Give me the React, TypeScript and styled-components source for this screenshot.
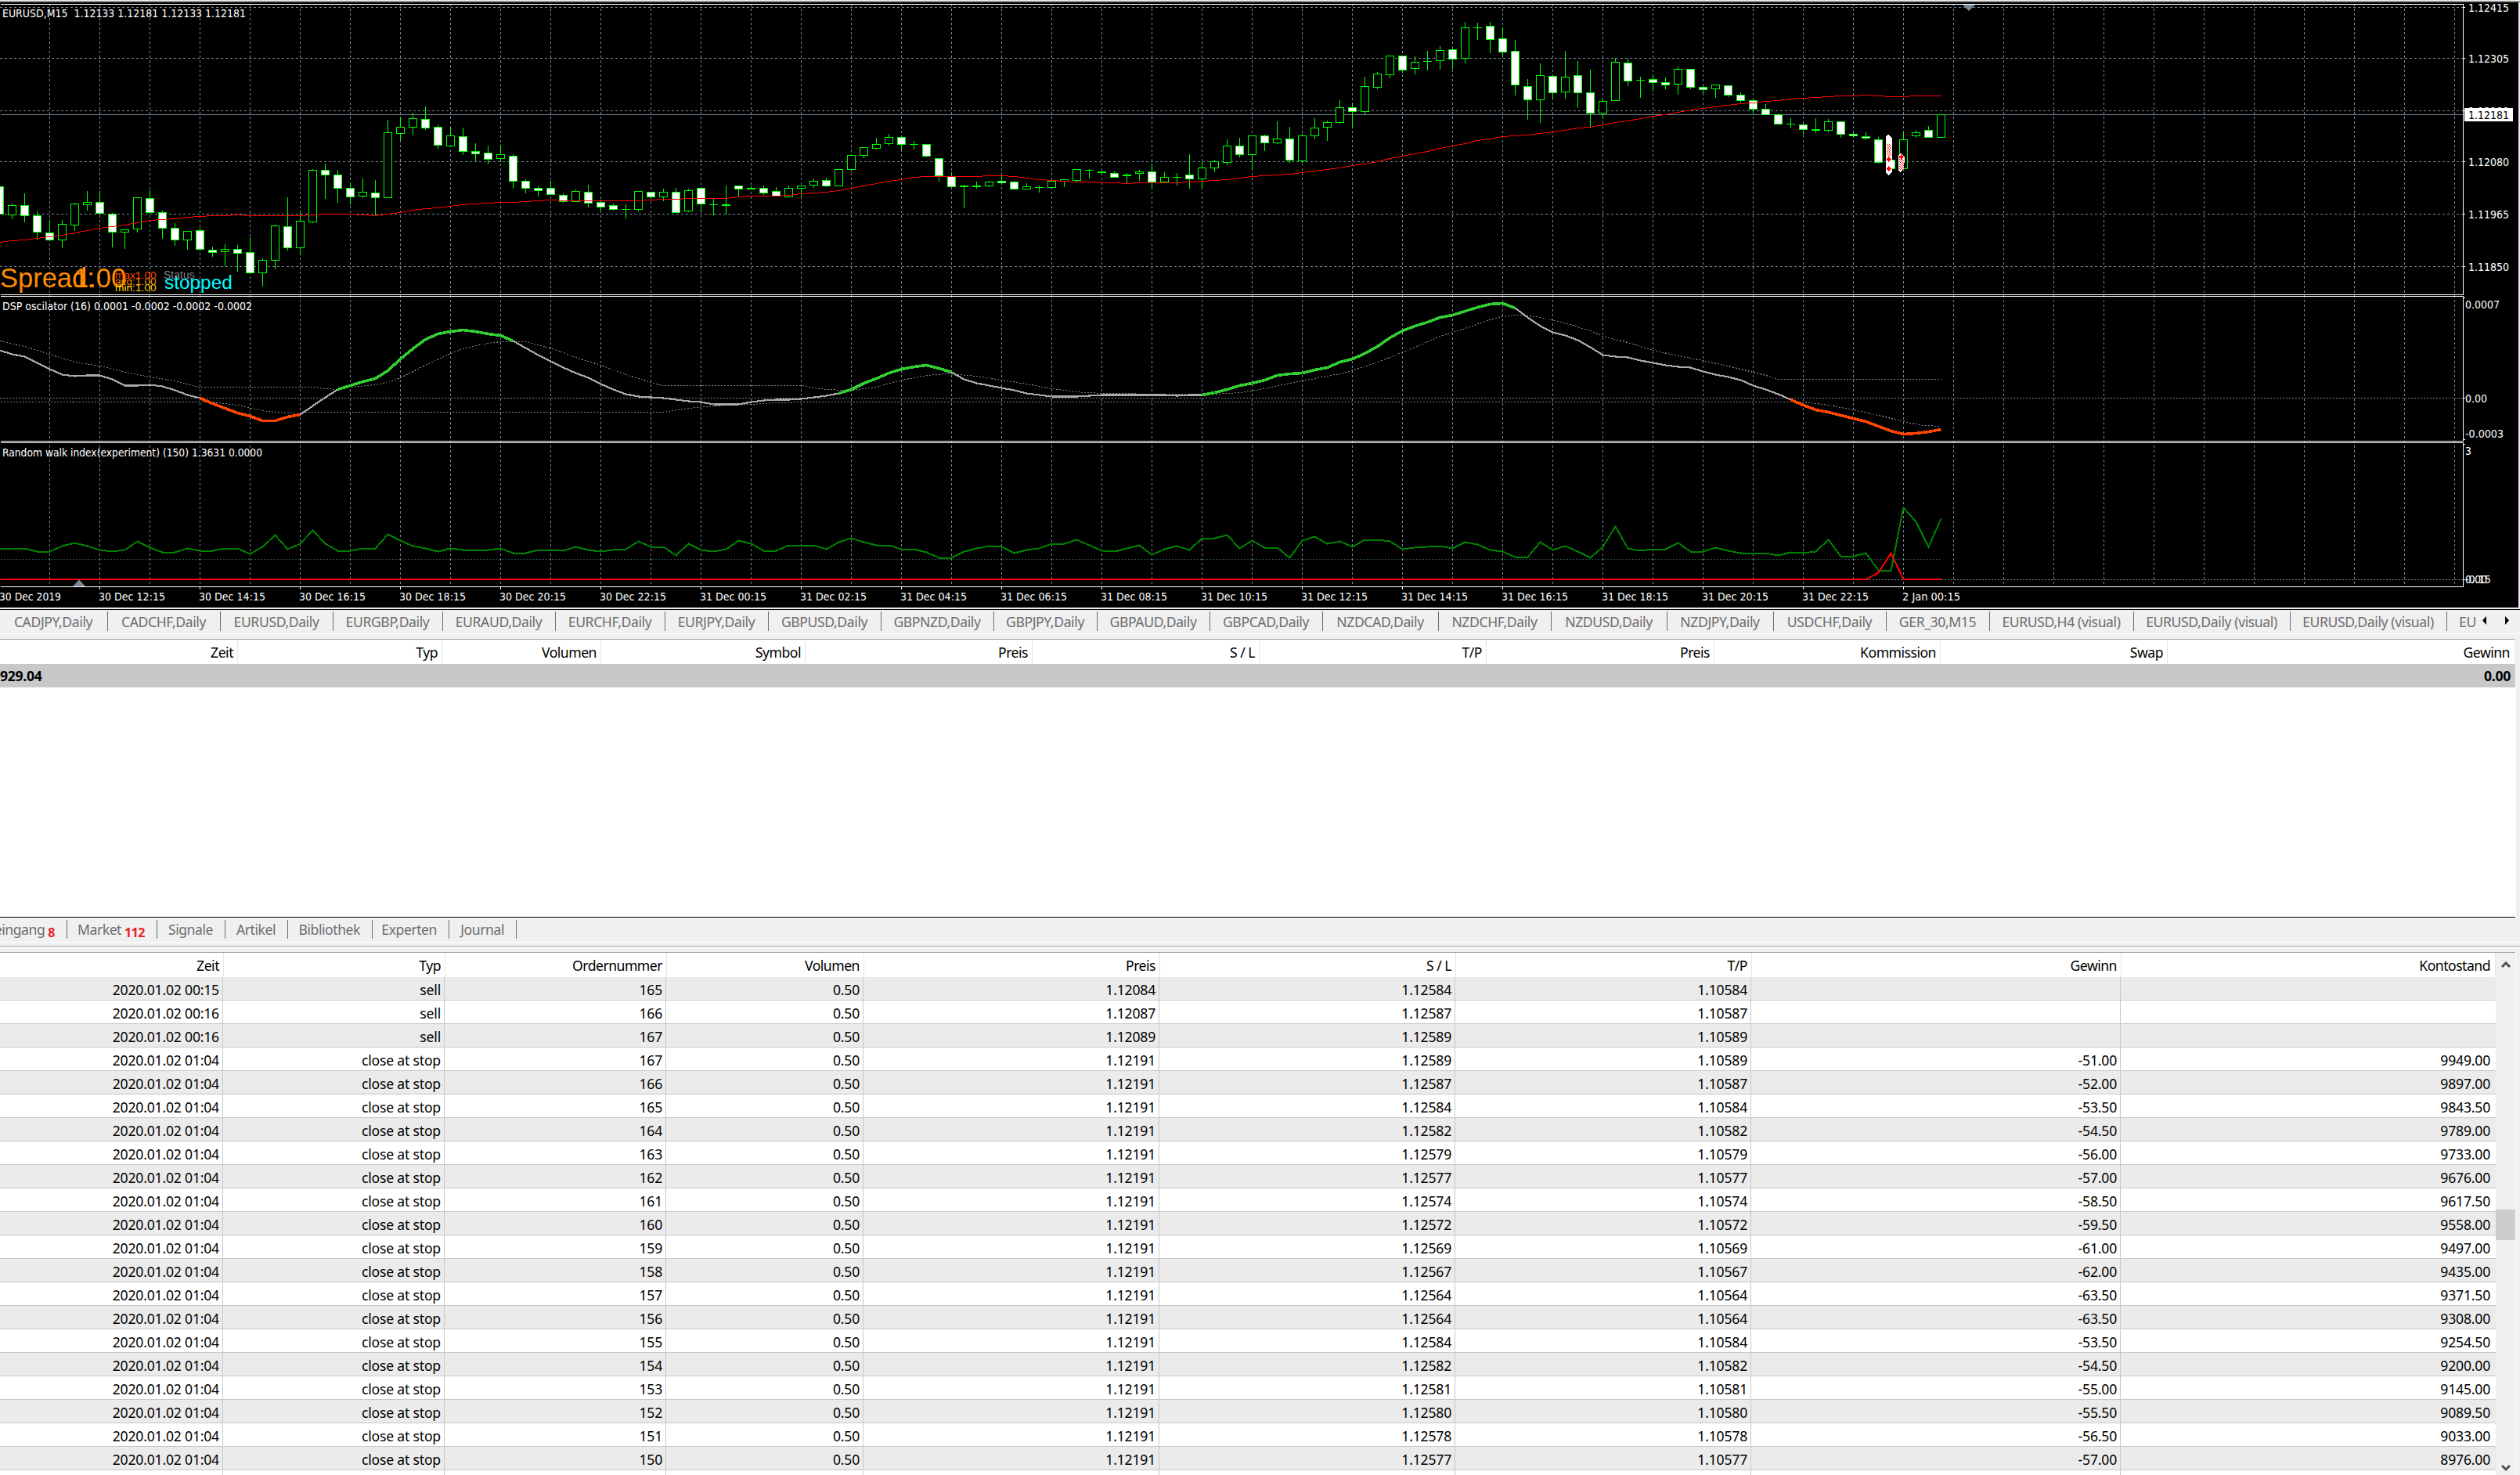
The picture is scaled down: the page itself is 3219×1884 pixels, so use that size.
import { Fragment } from 'react';
import styled, { createGlobalStyle } from 'styled-components';

const GlobalStyle = createGlobalStyle`
  html,
  body {
    margin: 0;
    padding: 0;
    background: #f0f0f0;
  }
`;

const uiFont = `'Noto Sans', 'Open Sans', sans-serif`;
const chartFont = `'DejaVu Sans Condensed', 'DejaVu Sans', sans-serif`;

const grid = '#778899';
const lime = '#00ff00';

const Terminal = styled.div`
  display: flex;
  flex-direction: column;
  width: 3219px;
  height: 1884px;
  overflow: hidden;
  background: #f0f0f0;
  font-family: ${uiFont};
  font-size: 17.6px;
  color: #000;
`;

const ChartWindow = styled.div`
  box-sizing: border-box;
  height: 779px;
  flex: none;
  border-top: 1px solid #f0f0f0;
  border-bottom: 1px solid #000;
  background: #f4eef4;

  .bevel {
    height: 2px;
    box-sizing: border-box;
    background: #696969;
    border-top: 1px solid #a8a8a8;
  }

  svg {
    display: block;
    background: #000;
    font-family: ${chartFont};
    font-size: 14.2px;
  }

  .object {
    font-family: 'Liberation Sans', Arial, sans-serif;
  }
`;

const ChartTabs = styled.div`
  display: flex;
  flex: none;
  box-sizing: border-box;
  height: 31px;
  padding: 2px 0 4px;
  border-bottom: 1px solid #fff;
  overflow: hidden;
  color: #6d6d6d;
`;

const ChartTab = styled.div<{ $width: number }>`
  display: flex;
  align-items: center;
  justify-content: center;
  flex: none;
  box-sizing: border-box;
  width: ${({ $width }) => $width}px;
  height: 25px;
  padding-right: 1px;
  border-right: 1px solid #6d6d6d;
  letter-spacing: -0.4px;
  white-space: pre;

  &:last-of-type {
    justify-content: flex-start;
    padding-left: 15px;
    border-right: 0;
  }
`;

const TabArrows = styled.svg`
  flex: none;
  margin-top: 1px;
`;

const Panel = styled.div<{ $height: number }>`
  display: flex;
  flex-direction: column;
  flex: none;
  box-sizing: border-box;
  width: 3213px;
  height: ${({ $height }) => $height}px;
  background: #fff;
  border-top: 1px solid #a0a0a0;
  overflow: hidden;
  box-shadow: 1px 0 0 #fafafa;
`;

const TradePanel = styled(Panel)`
  margin-top: 6px;
  border-bottom: 1px solid #000;
`;

const HeaderRow = styled.div<{ $columns: string; $height: number }>`
  display: grid;
  flex: none;
  grid-template-columns: ${({ $columns }) => $columns};
  height: ${({ $height }) => $height}px;
`;

const HeaderCell = styled.div`
  display: flex;
  align-items: center;
  justify-content: flex-end;
  padding: 1px 5px 0 0;
  border-right: 1px solid #e5e5e5;
  letter-spacing: -0.5px;

  &:last-child {
    padding-right: 6px;
  }
`;

const SummaryRow = styled.div`
  display: flex;
  align-items: center;
  justify-content: space-between;
  flex: none;
  height: 30px;
  padding-right: 6px;
  background: #c8c8c8;
  font-weight: bold;
  letter-spacing: -0.3px;
`;

const ToolTabs = styled.div`
  display: flex;
  flex: none;
  box-sizing: border-box;
  height: 32px;
  padding: 3px 0 4px;
  border-bottom: 1px solid #fff;
  color: #6d6d6d;
  overflow: hidden;
`;

const ToolTab = styled.div<{ $width: number }>`
  display: flex;
  align-items: center;
  justify-content: flex-end;
  flex: none;
  box-sizing: border-box;
  width: ${({ $width }) => $width}px;
  height: 24px;
  padding-right: 15px;
  border-right: 1px solid #6d6d6d;
  letter-spacing: -0.45px;

  .count {
    margin: 8px 0 0 4px;
    font-size: 16px;
    font-weight: bold;
    color: #ed1c24;
    letter-spacing: -0.5px;
  }
`;

const Splitter = styled.div`
  flex: none;
  height: 2px;
  box-sizing: border-box;
  margin: 4px 0 6px;
  background: #fff;
  border-top: 1px solid #a0a0a0;
`;

const ResultsPanel = styled(Panel)`
  flex-direction: row;
`;

const Results = styled.div`
  width: 3188px;
  flex: none;
  overflow: hidden;
`;

const ResultRow = styled.div<{ $even: boolean }>`
  display: grid;
  grid-template-columns: 285px 283px 283px 252px 378px 378px 378px 472px 479px;
  box-sizing: border-box;
  height: 30px;
  border-bottom: 1px solid #c8c8c8;
  background: ${({ $even }) => ($even ? '#ebebeb' : '#fff')};
`;

const Cell = styled.div`
  display: flex;
  align-items: center;
  justify-content: flex-end;
  padding: 2px 4px 0 0;
  border-right: 1px solid #c8c8c8;
  letter-spacing: -0.2px;

  &:last-child {
    padding-right: 6px;
    border-right-color: transparent;
  }
`;

const ScrollBar = styled.div`
  display: flex;
  flex-direction: column;
  align-items: center;
  width: 25px;
  height: 668px;
  background: #f0f0f0;

  .thumb {
    width: 25px;
    height: 39px;
    margin: 308px 0 auto;
    background: #cdcdcd;
  }

  svg {
    margin: 10px 0 0;
  }

  .down {
    margin: 0 0 5px;
  }
`;

const BAR = 16;
const barX = (i: number) => i * BAR - 1;

// high, body top, body bottom, low, 1 = falling bar
const candles: number[][] = [
  [238, 238, 273, 273, 1], [260, 262, 274, 279, 0], [247, 262, 275, 283, 1], [270, 275, 296, 306, 1],
  [281, 297, 306, 307, 1], [281, 286, 306, 316, 0], [259, 260, 287, 294, 0], [244, 258, 261, 268, 0],
  [244, 258, 272, 273, 1], [272, 273, 296, 315, 1], [293, 293, 296, 317, 0], [252, 252, 292, 296, 0],
  [243, 253, 271, 272, 1], [269, 271, 291, 304, 1], [285, 291, 306, 313, 1], [295, 295, 306, 318, 0],
  [291, 294, 318, 319, 1], [315, 319, 322, 327, 1], [312, 318, 321, 339, 0], [313, 318, 323, 346, 1],
  [303, 322, 348, 349, 1], [330, 332, 348, 365, 0], [287, 288, 332, 343, 0], [252, 289, 316, 319, 1],
  [269, 282, 316, 325, 0], [216, 217, 283, 284, 0], [209, 217, 223, 253, 1], [217, 223, 240, 258, 1],
  [233, 240, 251, 260, 1], [228, 245, 250, 252, 0], [230, 246, 252, 274, 1], [153, 169, 252, 252, 0],
  [149, 162, 170, 178, 0], [144, 151, 162, 172, 0], [136, 152, 163, 165, 1], [159, 162, 185, 189, 1],
  [163, 173, 186, 187, 0], [163, 174, 193, 197, 1], [183, 193, 196, 205, 1], [186, 195, 203, 209, 1],
  [185, 197, 202, 206, 0], [197, 199, 231, 240, 1], [229, 231, 240, 246, 1], [237, 240, 243, 250, 1],
  [231, 240, 248, 248, 1], [247, 249, 257, 258, 1], [242, 244, 257, 257, 0], [236, 245, 259, 264, 1],
  [255, 258, 264, 270, 1], [260, 262, 267, 268, 1], [261, 267, 267, 278, 0], [244, 244, 267, 269, 0],
  [245, 245, 251, 253, 1], [241, 245, 251, 256, 0], [240, 245, 271, 271, 1], [241, 243, 269, 270, 0],
  [239, 240, 260, 270, 1], [254, 261, 261, 274, 0], [237, 261, 262, 273, 0], [237, 237, 241, 250, 1],
  [237, 240, 241, 241, 0], [237, 240, 246, 248, 1], [239, 244, 250, 250, 1], [237, 240, 251, 251, 0],
  [237, 237, 240, 250, 0], [228, 231, 236, 239, 0], [227, 230, 237, 238, 1], [216, 216, 237, 237, 0],
  [197, 198, 216, 218, 0], [188, 188, 198, 201, 0], [176, 184, 189, 190, 0], [171, 175, 183, 185, 0],
  [174, 175, 184, 191, 1], [180, 184, 184, 190, 0], [184, 184, 199, 200, 1], [202, 202, 224, 231, 1],
  [220, 225, 238, 238, 1], [236, 237, 238, 265, 0], [232, 237, 238, 240, 0], [231, 232, 237, 238, 0],
  [225, 231, 233, 235, 1], [231, 232, 241, 241, 1], [234, 238, 241, 241, 0], [237, 239, 239, 245, 0],
  [231, 231, 239, 239, 0], [229, 229, 231, 238, 0], [216, 216, 230, 231, 0], [216, 217, 217, 227, 0],
  [219, 219, 220, 223, 0], [219, 221, 226, 226, 1], [221, 223, 224, 234, 0], [217, 219, 221, 230, 0],
  [209, 219, 232, 240, 1], [220, 226, 232, 232, 0], [221, 226, 226, 236, 0], [197, 223, 228, 240, 1],
  [207, 214, 228, 240, 0], [204, 206, 214, 219, 0], [178, 186, 207, 210, 0], [176, 186, 197, 200, 1],
  [173, 173, 197, 216, 0], [172, 173, 182, 192, 1], [155, 177, 182, 183, 0], [162, 177, 204, 207, 1],
  [171, 173, 205, 207, 0], [151, 163, 173, 177, 0], [154, 156, 162, 179, 0], [128, 137, 156, 157, 0],
  [131, 137, 142, 163, 1], [98, 110, 142, 146, 0], [92, 94, 111, 113, 0], [71, 71, 95, 99, 0],
  [71, 71, 89, 92, 1], [72, 79, 87, 94, 0], [65, 78, 78, 89, 0], [59, 64, 77, 88, 0],
  [62, 63, 75, 87, 1], [28, 35, 74, 80, 0], [29, 35, 35, 50, 0], [28, 33, 50, 67, 1],
  [35, 49, 66, 72, 1], [51, 65, 108, 121, 1], [101, 110, 127, 152, 1], [81, 96, 127, 156, 0],
  [95, 97, 118, 125, 1], [65, 98, 117, 125, 0], [78, 96, 118, 137, 1], [89, 118, 144, 162, 1],
  [125, 129, 144, 151, 0], [74, 79, 128, 128, 0], [75, 80, 103, 109, 1], [98, 102, 102, 124, 0],
  [97, 101, 105, 116, 1], [99, 105, 108, 113, 1], [85, 88, 107, 120, 0], [88, 88, 111, 113, 1],
  [110, 111, 114, 119, 1], [108, 108, 113, 124, 0], [109, 109, 121, 123, 1], [118, 121, 128, 130, 1],
  [126, 128, 139, 145, 1], [133, 139, 146, 146, 1], [145, 146, 158, 158, 1], [151, 158, 158, 163, 0],
  [158, 159, 165, 171, 1], [151, 165, 166, 169, 0], [152, 155, 166, 168, 0], [155, 155, 171, 175, 1],
  [169, 171, 173, 175, 1], [169, 174, 176, 178, 1], [175, 178, 207, 208, 1], [204, 204, 215, 215, 1],
  [169, 178, 215, 215, 0], [166, 169, 173, 175, 0], [161, 166, 175, 175, 1], [146, 146, 175, 175, 0],
];

const movingAverage = [
  309, 307, 306, 304, 302, 300, 297, 294, 291, 289, 287, 284, 281, 280, 279, 277, 276, 275, 275, 274,
  275, 275, 275, 275, 275, 274, 273, 273, 273, 274, 275, 273, 271, 268, 266, 265, 263, 261, 260, 259,
  258, 258, 257, 256, 255, 256, 256, 256, 256, 256, 256, 256, 255, 254, 254, 253, 253, 253, 253, 251,
  250, 250, 250, 249, 247, 246, 245, 243, 240, 237, 234, 231, 229, 226, 225, 225, 225, 225, 225, 224,
  224, 225, 227, 229, 230, 231, 232, 232, 233, 233, 234, 233, 233, 233, 233, 232, 231, 230, 229, 227,
  225, 224, 223, 222, 220, 218, 216, 214, 211, 209, 206, 202, 199, 196, 193, 189, 186, 183, 179, 177,
  174, 173, 172, 170, 168, 166, 163, 162, 159, 156, 154, 151, 148, 146, 143, 140, 138, 136, 134, 132,
  131, 129, 128, 126, 125, 124, 123, 122, 122, 121, 122, 123, 123, 122, 122, 122,
];

const dsp = [
  447, 452, 455, 463, 471, 478, 480, 479, 479, 484, 492, 492, 491, 493, 498, 504, 508, 515, 521, 527,
  531, 537, 537, 532, 529, 518, 507, 497, 492, 487, 483, 473, 458, 445, 433, 426, 423, 421, 423, 426,
  428, 435, 444, 453, 461, 469, 476, 482, 490, 497, 503, 506, 507, 508, 510, 512, 513, 516, 516, 516,
  513, 511, 510, 510, 509, 507, 505, 502, 497, 489, 483, 476, 471, 468, 466, 470, 475, 484, 489, 492,
  495, 498, 502, 504, 506, 506, 506, 505, 504, 504, 504, 504, 504, 504, 505, 504, 504, 501, 497, 492,
  489, 485, 479, 477, 476, 472, 469, 462, 458, 451, 442, 431, 422, 416, 411, 405, 402, 397, 392, 388,
  387, 393, 405, 416, 424, 428, 434, 443, 453, 455, 456, 460, 463, 466, 468, 469, 474, 478, 481, 485,
  492, 497, 503, 510, 517, 523, 526, 530, 534, 538, 544, 550, 554, 553, 551, 548,
];

const dspSegments: [number, number, string][] = [
  [0, 16, '#a9a9a9'],
  [16, 24, '#ff4500'],
  [24, 27, '#a9a9a9'],
  [27, 41, '#32cd32'],
  [41, 67, '#a9a9a9'],
  [67, 76, '#32cd32'],
  [76, 96, '#a9a9a9'],
  [96, 121, '#32cd32'],
  [121, 143, '#a9a9a9'],
  [143, 155, '#ff4500'],
];

const upperBand =
  '0,435 31,442 63,452 95,462 127,467 160,475 191,481 223,486 255,494 402,494 415,496 431,497 447,494 479,491 495,488 511,482 543,466 575,451 591,445 607,441 623,438 639,436 671,436 703,444 735,456 767,466 799,478 831,488 847,492 1024,492 1045,496 1073,498 1087,498 1119,494 1151,485 1183,479 1209,477 1247,480 1279,485 1311,490 1343,496 1382,501 1417,502 1487,503 1551,503 1583,501 1615,496 1647,489 1679,483 1711,477 1743,468 1759,462 1775,456 1807,443 1839,429 1871,419 1903,408 1919,404 1935,402 1951,403 1967,405 1999,412 2031,422 2047,429 2079,437 2111,447 2143,454 2175,460 2207,467 2239,475 2259,480 2271,484 2479,484';

const lowerBand =
  '0,513 271,513 303,517 335,524 351,526 383,528 385,526 847,526 879,521 911,518 959,516 991,514 1031,513 2279,513 2303,513 2335,517 2367,523 2399,530 2431,538 2457,543 2479,544';

const walkIndex = [
  701, 700, 700, 704, 704, 697, 693, 697, 702, 704, 702, 691, 699, 705, 705, 700, 703, 703, 700, 700,
  707, 698, 683, 701, 694, 677, 694, 703, 703, 700, 700, 682, 690, 697, 700, 704, 700, 702, 702, 702,
  700, 706, 706, 702, 702, 703, 698, 702, 704, 702, 701, 691, 698, 698, 709, 694, 702, 704, 701, 690,
  694, 703, 703, 696, 696, 696, 701, 692, 687, 692, 696, 696, 701, 701, 705, 712, 712, 704, 700, 697,
  698, 706, 702, 700, 694, 694, 689, 696, 703, 704, 700, 696, 708, 701, 697, 702, 687, 687, 683, 700,
  690, 699, 699, 712, 690, 685, 694, 691, 698, 689, 689, 691, 701, 699, 698, 697, 700, 692, 695, 702,
  704, 711, 711, 692, 702, 697, 704, 712, 698, 672, 700, 703, 701, 701, 693, 704, 704, 699, 703, 706,
  706, 706, 709, 705, 706, 704, 689, 710, 710, 706, 728, 728, 648, 666, 698, 662,
];

const toPoints = (values: number[], from = 0) =>
  values.map((y, i) => `${barX(from + i)},${y}`).join(' ');

const timeLabels = [
  '30 Dec 12:15', '30 Dec 14:15', '30 Dec 16:15', '30 Dec 18:15', '30 Dec 20:15',
  '30 Dec 22:15', '31 Dec 00:15', '31 Dec 02:15', '31 Dec 04:15', '31 Dec 06:15',
  '31 Dec 08:15', '31 Dec 10:15', '31 Dec 12:15', '31 Dec 14:15', '31 Dec 16:15',
  '31 Dec 18:15', '31 Dec 20:15', '31 Dec 22:15', '2 Jan 00:15',
];

const priceLevels: [number, string][] = [
  [9, '1.12415'],
  [74, '1.12305'],
  [141, '1.12190'],
  [206, '1.12080'],
  [273, '1.11965'],
  [340, '1.11850'],
];

const Label = ({ x, y, width, children }: { x: number; y: number; width: number; children: string }) => (
  <text x={x} y={y} textLength={width} lengthAdjust="spacingAndGlyphs" style={{ whiteSpace: 'pre' }}>
    {children}
  </text>
);

const TradeMarks = () => (
  <g shapeRendering="crispEdges">
    <polygon fill="#fff" points="2411,172 2413,172 2417,177 2417,219 2412,224 2409,221 2409,174" />
    <rect x="2410" y="184" width="6" height="16" fill="url(#hatch)" />
    <polygon fill="#fff" points="2427,196 2430,197 2433,201 2432,216 2427,220 2425,218 2425,198" />
    <rect x="2426" y="203" width="6" height="14" fill="url(#hatch)" />
    {[[2410, 203], [2410, 215], [2426, 200]].map(([x, y]) => (
      <polygon
        key={`${x}-${y}`}
        fill="#ff0000"
        points={`${x},${y - 1} ${x + 2},${y - 1} ${x + 2},${y - 3} ${x + 6},${y + 0.5} ${x + 2},${y + 4} ${x + 2},${y + 2} ${x},${y + 2}`}
      />
    ))}
  </g>
);

const Chart = () => (
  <svg width="3217" height="773" viewBox="0 3 3217 773">
    <defs>
      <pattern id="hatch" width="3" height="3" patternUnits="userSpaceOnUse">
        <path d="M0 0h1v1H0zM1 1h1v1H1zM2 2h1v1H2z" fill="#ff0000" />
      </pattern>
    </defs>

    <g transform="translate(.5 .5)" shapeRendering="crispEdges" fill="none">
      <g stroke={grid} strokeDasharray="3 3">
        {Array.from({ length: 49 }, (_, i) => (
          <path key={i} d={`M${63 + i * 64} 4.5V749`} />
        ))}
        {priceLevels.map(([y]) => (
          <path key={y} d={`M-.5 ${y}H3146`} />
        ))}
      </g>
      <path d="M0 146H3146" stroke={grid} />
      <path d="M-.5 508H3146M-.5 740H3146" stroke={grid} strokeDasharray="2 2" />

      <g stroke={lime}>
        {candles.map(([high, top, bottom, low, falling], i) => (
          <Fragment key={i}>
            <path d={`M${barX(i)} ${high - 0.5}V${low + 0.5}`} />
            {bottom > top ? (
              <rect
                x={barX(i) - 5}
                y={top}
                width="10"
                height={bottom - top}
                fill={falling ? '#fff' : '#000'}
              />
            ) : (
              <path d={`M${barX(i) - 5.5} ${top}h11`} />
            )}
          </Fragment>
        ))}
      </g>
      <polyline points={toPoints(movingAverage)} stroke="#ff0000" />

      <g stroke="#808080" strokeDasharray="2 2">
        <polyline points={upperBand} />
        <polyline points={lowerBand} />
      </g>
      {dspSegments.map(([from, to, color]) => (
        <polyline
          key={from}
          points={toPoints(dsp.slice(from, to + 1), from)}
          stroke={color}
          strokeWidth={color === '#a9a9a9' ? 2.2 : 3.6}
        />
      ))}

      <path d="M0 714H2479" stroke="#2f4f4f" strokeDasharray="2 2" />
      <polyline points={toPoints(walkIndex)} stroke="#008000" strokeWidth="2" />
      <polyline
        points="0,739.5 2383,739.5 2399,731 2415,706 2431,739.5 2479,739.5"
        stroke="#ff0000"
        strokeWidth="2"
      />

      <g stroke="#fff">
        <path d="M0 5H3146V376H0M0 378H3146V563H0M0 565H3146V749H0" />
        {priceLevels.map(([y]) => (
          <path key={y} d={`M3146 ${y}h2.5`} />
        ))}
        <path d="M3146 380h2.5M3146 508h2.5M3146 561h2.5M3146 567h2.5M3146 740h2.5" />
        {timeLabels.map((_, i) => (
          <path key={i} d={`M${127 + i * 128} 749v3.5`} />
        ))}
      </g>
    </g>

    <TradeMarks />
    <path d="M2507 6h16l-8 8z" fill={grid} />
    <path d="M93 749h16l-8-9z" fill={grid} />

    <g fill="#fff">
      <Label x={3} y={22} width={311}>
        {'EURUSD,M15  1.12133 1.12181 1.12133 1.12181'}
      </Label>
      <Label x={3} y={396} width={319}>
        DSP oscilator (16) 0.0001 -0.0002 -0.0002 -0.0002
      </Label>
      <Label x={3} y={583} width={332}>
        Random walk index(experiment) (150) 1.3631 0.0000
      </Label>
      {priceLevels.map(([y, label]) => (
        <Label key={label} x={3153} y={y + 6} width={52}>
          {label}
        </Label>
      ))}
      <Label x={3149} y={394} width={44}>0.0007</Label>
      <Label x={3149} y={514} width={28}>0.00</Label>
      <Label x={3149} y={559} width={49}>-0.0003</Label>
      <Label x={3149} y={581} width={8}>3</Label>
      <Label x={3149} y={745} width={28}>0.00</Label>
      <Label x={3149} y={745} width={33}>-0.15</Label>
      <Label x={-1} y={767} width={79}>30 Dec 2019</Label>
      {timeLabels.map((label, i) => (
        <Label key={label} x={126 + i * 128} y={767} width={i === 18 ? 74 : 85}>
          {label}
        </Label>
      ))}
    </g>
    <rect x="3148" y="138" width="62" height="17" fill="#fff" />
    <Label x={3153} y={152} width={52}>1.12181</Label>

    <g className="object">
      <text x="0" y="367" fontSize="34.5" fill="#ff8c00">Spread:</text>
      <text x="94" y="367" fontSize="34.5" fill="#ff8c00">1.00</text>
      <g fontSize="13.7">
        <g fill="#ff4500">
          <text x="147" y="356">max:</text>
          <text x="173" y="356">1.00</text>
        </g>
        <g fill="#ff8c00">
          <text x="147" y="364">avg:</text>
          <text x="173" y="364">1.00</text>
        </g>
        <g fill="#ffd700">
          <text x="147" y="372">min:</text>
          <text x="173" y="372">1.00</text>
        </g>
        <text x="209" y="356" fontSize="14" fill="#808080">Status</text>
      </g>
      <text x="210" y="369" fontSize="24.4" fill="#00ffff">stopped</text>
    </g>
  </svg>
);

const chartTabs: [string, number][] = [
  ['CADJPY,Daily', 138],
  ['CADCHF,Daily', 144],
  ['EURUSD,Daily', 144],
  ['EURGBP,Daily', 140],
  ['EURAUD,Daily', 144],
  ['EURCHF,Daily', 140],
  ['EURJPY,Daily', 132],
  ['GBPUSD,Daily', 144],
  ['GBPNZD,Daily', 144],
  ['GBPJPY,Daily', 132],
  ['GBPAUD,Daily', 144],
  ['GBPCAD,Daily', 144],
  ['NZDCAD,Daily', 148],
  ['NZDCHF,Daily', 144],
  ['NZDUSD,Daily', 148],
  ['NZDJPY,Daily', 136],
  ['USDCHF,Daily', 144],
  ['GER_30,M15', 132],
  ['EURUSD,H4 (visual)', 184],
  ['EURUSD,Daily (visual)', 200],
  ['EURUSD,Daily (visual)', 200],
  ['EU', 44],
];

const tradeHeaders = [
  'Zeit', 'Typ', 'Volumen', 'Symbol', 'Preis', 'S / L', 'T/P', 'Preis', 'Kommission', 'Swap', 'Gewinn',
];

const toolTabs: { label: string; width: number; count?: number }[] = [
  { label: 'eingang', width: 86, count: 8 },
  { label: 'Market', width: 115, count: 112 },
  { label: 'Signale', width: 87 },
  { label: 'Artikel', width: 80 },
  { label: 'Bibliothek', width: 108 },
  { label: 'Experten', width: 98 },
  { label: 'Journal', width: 86 },
];

const resultHeaders = [
  'Zeit', 'Typ', 'Ordernummer', 'Volumen', 'Preis', 'S / L', 'T/P', 'Gewinn', 'Kontostand',
];

const closed = '2020.01.02 01:04';

const results: string[][] = [
  ['2020.01.02 00:15', 'sell', '165', '1.12084', '1.12584', '1.10584', '', ''],
  ['2020.01.02 00:16', 'sell', '166', '1.12087', '1.12587', '1.10587', '', ''],
  ['2020.01.02 00:16', 'sell', '167', '1.12089', '1.12589', '1.10589', '', ''],
  ...[
    ['167', '589', '-51.00', '9949.00'],
    ['166', '587', '-52.00', '9897.00'],
    ['165', '584', '-53.50', '9843.50'],
    ['164', '582', '-54.50', '9789.00'],
    ['163', '579', '-56.00', '9733.00'],
    ['162', '577', '-57.00', '9676.00'],
    ['161', '574', '-58.50', '9617.50'],
    ['160', '572', '-59.50', '9558.00'],
    ['159', '569', '-61.00', '9497.00'],
    ['158', '567', '-62.00', '9435.00'],
    ['157', '564', '-63.50', '9371.50'],
    ['156', '564', '-63.50', '9308.00'],
    ['155', '584', '-53.50', '9254.50'],
    ['154', '582', '-54.50', '9200.00'],
    ['153', '581', '-55.00', '9145.00'],
    ['152', '580', '-55.50', '9089.50'],
    ['151', '578', '-56.50', '9033.00'],
    ['150', '577', '-57.00', '8976.00'],
  ].map(([order, pips, profit, balance]) => [
    closed, 'close at stop', order, '1.12191', `1.12${pips}`, `1.10${pips}`, profit, balance,
  ]),
];

const App = () => {
  return (
    <Terminal>
      <GlobalStyle />
      <ChartWindow>
        <div className="bevel" />
        <Chart />
      </ChartWindow>
      <ChartTabs>
        {chartTabs.map(([label, width], i) => (
          <ChartTab key={i} $width={width}>
            {label}
          </ChartTab>
        ))}
        <TabArrows width="40" height="20" viewBox="0 0 40 20">
          <path d="M6 5v11L1 10.500zM30 5v11l5-5.500z" fill="#000" />
        </TabArrows>
      </ChartTabs>

      <TradePanel $height={356}>
        <HeaderRow
          $height={31}
          $columns="304px 261px 203px 261px 290px 290px 290px 291px 289px 290px 444px"
        >
          {tradeHeaders.map((header, i) => (
            <HeaderCell key={i}>{header}</HeaderCell>
          ))}
        </HeaderRow>
        <SummaryRow>
          <span>929.04</span>
          <span>0.00</span>
        </SummaryRow>
      </TradePanel>

      <ToolTabs>
        {toolTabs.map(({ label, width, count }) => (
          <ToolTab key={label} $width={width}>
            {label}
            {count && <span className="count">{count}</span>}
          </ToolTab>
        ))}
      </ToolTabs>
      <Splitter />

      <ResultsPanel $height={668}>
        <Results>
          <HeaderRow
            $height={31}
            $columns="286px 283px 283px 252px 378px 378px 378px 472px 478px"
          >
            {resultHeaders.map((header) => (
              <HeaderCell key={header}>{header}</HeaderCell>
            ))}
          </HeaderRow>
          {results.map(([time, type, order, price, sl, tp, profit, balance], i) => (
            <ResultRow key={i} $even={i % 2 === 0}>
              <Cell>{time}</Cell>
              <Cell>{type}</Cell>
              <Cell>{order}</Cell>
              <Cell>0.50</Cell>
              <Cell>{price}</Cell>
              <Cell>{sl}</Cell>
              <Cell>{tp}</Cell>
              <Cell>{profit}</Cell>
              <Cell>{balance}</Cell>
            </ResultRow>
          ))}
          <ResultRow $even={false}>
            {resultHeaders.map((header) => (
              <Cell key={header} />
            ))}
          </ResultRow>
        </Results>
        <ScrollBar>
          <svg width="14" height="10" viewBox="0 0 14 10">
            <path d="M2 8l5-5 5 5" fill="none" stroke="#505050" strokeWidth="3" />
          </svg>
          <div className="thumb" />
          <svg className="down" width="14" height="10" viewBox="0 0 14 10">
            <path d="M2 2l5 5 5-5" fill="none" stroke="#505050" strokeWidth="3" />
          </svg>
        </ScrollBar>
      </ResultsPanel>
    </Terminal>
  );
};

export default App;
